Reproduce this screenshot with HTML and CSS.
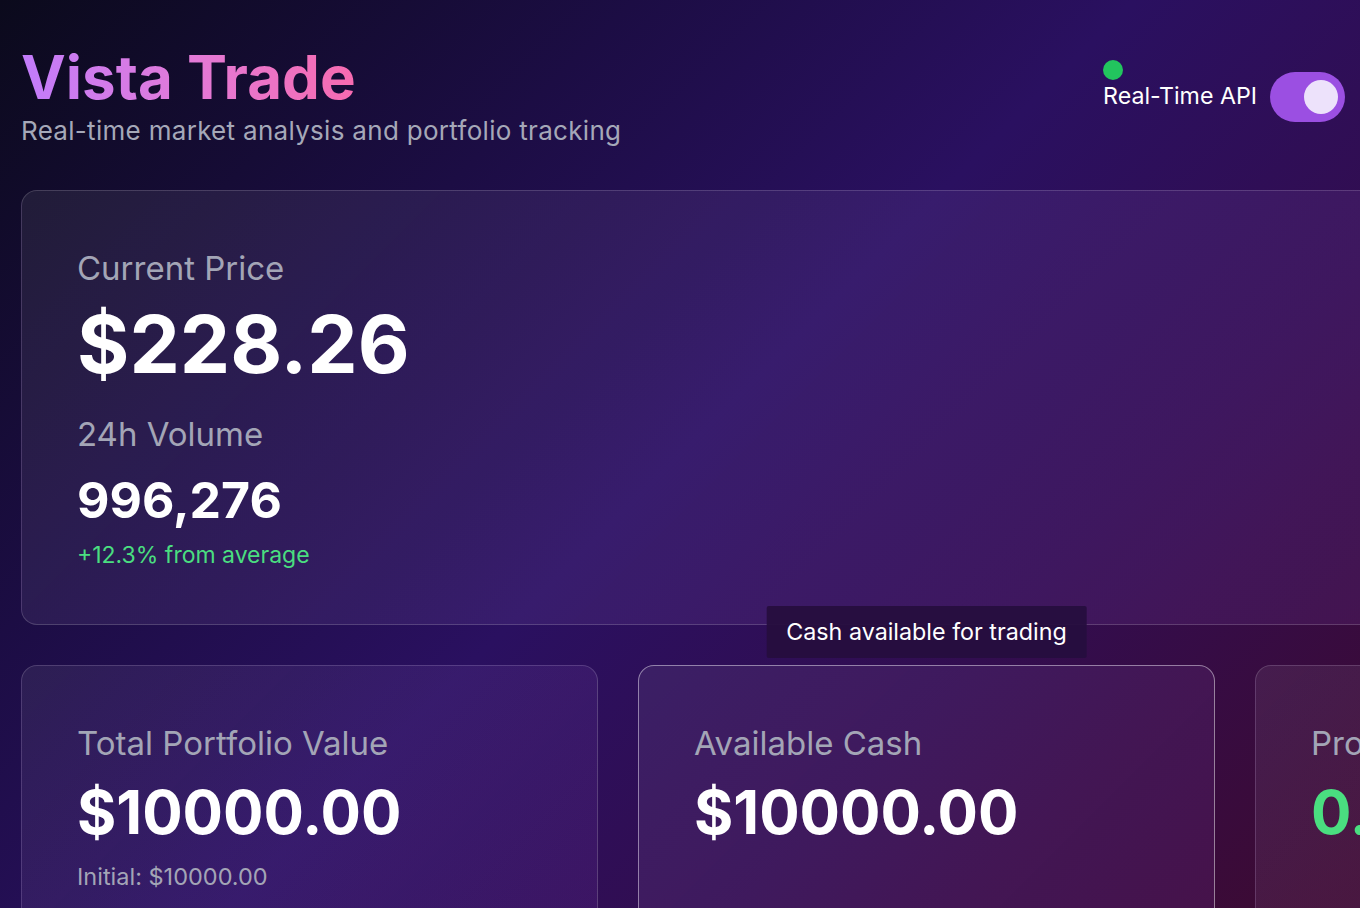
FILE: index.html
```html
<!DOCTYPE html>
<html lang="en">
<head>
<meta charset="utf-8">
<title>Vista Trade</title>
<link rel="stylesheet" href="styles.css">
</head>
<body>
<div class="page">
  <header class="header">
    <div class="brand">
      <h1 class="title">Vista Trade</h1>
      <p class="subtitle">Real-time market analysis and portfolio tracking</p>
    </div>
    <div class="api">
      <div class="api-label">
        <span class="dot"></span>
        <span class="api-text">Real-Time API</span>
      </div>
      <div class="toggle"><span class="knob"></span></div>
    </div>
  </header>

  <section class="card hero">
    <div class="label">Current Price</div>
    <div class="price">$228.26</div>
    <div class="label vol-label">24h Volume</div>
    <div class="volume">996,276</div>
    <div class="change">+12.3% from average</div>
  </section>

  <section class="cards">
    <div class="card stat">
      <div class="label">Total Portfolio Value</div>
      <div class="value">$10000.00</div>
      <div class="sub">Initial: $10000.00</div>
    </div>
    <div class="card stat active">
      <div class="tooltip">Cash available for trading</div>
      <div class="label">Available Cash</div>
      <div class="value">$10000.00</div>
    </div>
    <div class="card stat">
      <div class="label">Profit/Loss</div>
      <div class="value green">0.00%</div>
    </div>
  </section>
</div>
</body>
</html>
```

FILE: styles.css
```css
html, body {
  margin: 0;
  padding: 0;
  height: 100%;
  overflow: hidden;
}
body {
  font-family: "Inter", "Noto Sans", sans-serif;
  color: #ffffff;
  background: linear-gradient(135deg, #0b0a1c 0%, #1c0d44 28%, #2a1060 50%, #320d50 72%, #3d0a30 100%);
  background-attachment: fixed;
}
.page {
  padding: 41px 15px 0 21px;
}
.header {
  display: flex;
  justify-content: space-between;
  align-items: flex-start;
  margin-bottom: 43px;
}
.title {
  margin: 0;
  font-size: 60px;
  line-height: 72px;
  font-weight: 700;
  background: linear-gradient(90deg, #c27cfb 0%, #e27ad8 50%, #f76bb0 100%);
  -webkit-background-clip: text;
  background-clip: text;
  color: transparent;
  display: inline-block;
}
.subtitle {
  margin: 2px 0 0;
  font-size: 26px;
  line-height: 32px;
  letter-spacing: 0.3px;
  color: #a5a8b8;
}
.api {
  display: flex;
  align-items: flex-start;
  gap: 13px;
  margin-top: 19px;
}
.api-label {
  display: flex;
  flex-direction: column;
  align-items: flex-start;
  gap: 2px;
}
.dot {
  width: 20px;
  height: 20px;
  border-radius: 50%;
  background: #22c55e;
}
.api-text {
  font-size: 23.2px;
  line-height: 28px;
  color: #ffffff;
}
.toggle {
  margin-top: 12px;
  width: 75px;
  height: 50px;
  border-radius: 25px;
  background: #9b4fe2;
  display: flex;
  align-items: center;
  justify-content: flex-end;
  padding: 0 7px;
  box-sizing: border-box;
}
.knob {
  width: 34px;
  height: 34px;
  border-radius: 50%;
  background: #ede2fb;
}
.card {
  border: 1px solid rgba(255, 255, 255, 0.16);
  border-radius: 16px;
  background: linear-gradient(135deg, rgba(255, 255, 255, 0.07) 0%, rgba(168, 85, 247, 0.10) 100%);
  box-sizing: border-box;
}
.hero {
  width: 1812px;
  height: 435px;
  padding: 57px 55px;
}
.label {
  font-size: 33px;
  line-height: 40px;
  color: #a3a5b6;
}
.price {
  margin-top: 15px;
  font-size: 80px;
  line-height: 82px;
  font-weight: 700;
}
.vol-label {
  margin-top: 29px;
}
.volume {
  margin-top: 18px;
  font-size: 50px;
  line-height: 56px;
  font-weight: 700;
}
.change {
  margin-top: 11px;
  font-size: 23px;
  line-height: 32px;
  color: #4ade80;
}
.cards {
  display: grid;
  grid-template-columns: repeat(3, 577px);
  gap: 40px;
  margin-top: 40px;
  width: 1812px;
}
.stat {
  position: relative;
  height: 300px;
  padding: 57px 55px;
}
.stat.active {
  border-color: rgba(255, 255, 255, 0.45);
}
.value {
  margin-top: 16px;
  font-size: 60px;
  line-height: 66px;
  font-weight: 700;
}
.value.green {
  color: #4ade80;
}
.sub {
  margin-top: 16px;
  font-size: 23.5px;
  line-height: 32px;
  color: #a3a5b6;
}
.tooltip {
  position: absolute;
  left: 50%;
  bottom: 100%;
  transform: translateX(-50%);
  margin-bottom: 8px;
  padding: 10px 20px;
  font-size: 23.3px;
  line-height: 32px;
  white-space: nowrap;
  background: rgba(38, 14, 62, 0.95);
  border-radius: 2px;
  color: #ffffff;
}
```
